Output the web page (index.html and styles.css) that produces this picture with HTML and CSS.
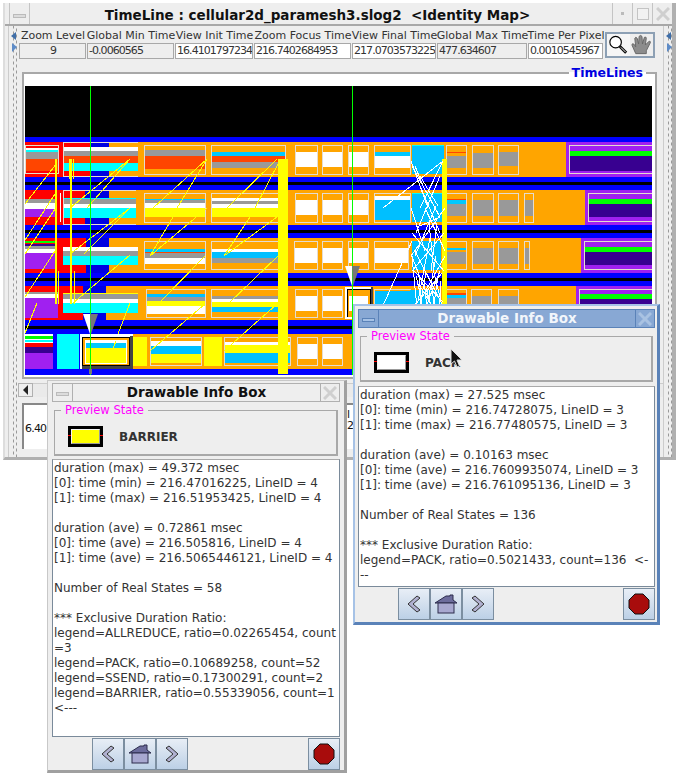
FILE: index.html
```html
<!DOCTYPE html>
<html lang="en">
<head>
    <meta charset="UTF-8">
    <link rel="stylesheet" href="styles.css">
    <title>TimeLine</title>
</head>
<body>
    <section class="window main-window">
        <header class="titlebar">
            <span class="wm-btn wm-menu"><i></i></span>
            <h1 class="title">TimeLine : cellular2d_paramesh3.slog2 &nbsp;&lt;Identity Map&gt;</h1>
            <span class="wm-btn wm-min"><i></i></span>
            <span class="wm-btn wm-max"><i></i></span>
            <span class="wm-btn wm-close">
                <svg width="14" height="14" viewBox="0 0 14 14"><path d="M1 1 L13 13 M13 1 L1 13" stroke="#cfcfcf" stroke-width="3"/></svg>
            </span>
        </header>
        <div class="main-body">
            <div class="divider">
                <svg width="8" height="20" viewBox="0 0 8 20"><path d="M6 0 V8 L1 4 Z" fill="#3f6ea8"/><path d="M2 11 V20 L7 15 Z" fill="#5e8cc8"/></svg>
            </div>
            <div class="content">
                <div class="toolbar">
                    <div class="readouts">
                        <div class="readout"><label>Zoom Level</label><output class="center">9</output></div>
                        <div class="readout"><label>Global Min Time</label><output>-0.0060565</output></div>
                        <div class="readout"><label>View Init Time</label><output class="live">16.4101797234</output></div>
                        <div class="readout"><label>Zoom Focus Time</label><output class="live">216.7402684953</output></div>
                        <div class="readout"><label>View Final Time</label><output class="live">217.0703573225</output></div>
                        <div class="readout"><label>Global Max Time</label><output>477.634607</output></div>
                        <div class="readout"><label>Time Per Pixel</label><output class="live">0.0010545967</output></div>
                    </div>
                    <div class="tools">
                        <span class="tool tool-on">
                            <svg width="24" height="24" viewBox="0 0 24 24"><circle cx="9" cy="9" r="6" fill="#fff" stroke="#000" stroke-width="1.2"/><path d="M13.500 13.500 L20 20" stroke="#000" stroke-width="3"/><path d="M14.500 14.500 L19.500 19.500" stroke="#fff" stroke-width="1"/></svg>
                        </span>
                        <span class="tool">
                            <svg width="24" height="24" viewBox="0 0 24 24"><path d="M6 21 L2 12 Q2 10 4 11 L6 14 L5 5 Q6 3 7.500 5 L9 11 L9.500 3 Q11 1 12.500 3 L13 11 L15 4 Q17 3 17 5 L16 12 L20 8 Q22 8 21 10 L17 18 L17 21 Z" fill="#8c8c8c" stroke="#666" stroke-width="1"/></svg>
                        </span>
                    </div>
                </div>

                <fieldset class="timelines">
                    <legend>TimeLines</legend>
                    <svg class="chart" width="627" height="289" viewBox="25 85 627 289" shape-rendering="crispEdges">
                        <rect class="blue" x="25" y="85" width="627" height="289"/>
                        <rect class="black" x="25" y="85" width="627" height="51"/>
                        <rect class="black" x="25" y="181" width="627" height="3"/>
                        <rect class="black" x="25" y="229" width="627" height="3"/>
                        <rect class="black" x="25" y="277" width="627" height="3"/>
                        <rect class="black" x="25" y="325" width="627" height="3"/>

                        <!-- row 1 -->
                        <g transform="translate(0 141)">
                            <rect class="red" x="25" y="0" width="38" height="35"/>
                            <rect class="white" x="26" y="6" width="32" height="2"/>
                            <rect class="cyan" x="26" y="8" width="32" height="2"/>
                            <rect class="grey" x="26" y="10" width="32" height="7"/>
                            <rect class="rust" x="26" y="17" width="32" height="12"/>
                            <rect class="box" x="25.500" y="3.500" width="33" height="28"/>
                            <rect class="red" x="63" y="0" width="27" height="35"/>
                            <rect class="navy" x="90" y="0" width="19" height="35"/>
                            <rect class="orange" x="109" y="0" width="29" height="35"/>
                            <rect class="white" x="63" y="5" width="75" height="4"/>
                            <rect class="grey" x="63" y="9" width="75" height="5"/>
                            <rect class="rust" x="63" y="14" width="75" height="7"/>
                            <rect class="cyan" x="63" y="21" width="75" height="8"/>
                            <rect class="box" x="63.500" y="0.500" width="75" height="34"/>
                            <rect class="orange" x="138" y="0" width="428" height="35"/>
                            <rect class="grey" x="145" y="8" width="60" height="6"/>
                            <rect class="rust" x="145" y="14" width="60" height="13"/>
                            <rect class="box" x="144.500" y="3.500" width="61" height="29"/>
                            <rect class="cyan2" x="212" y="10" width="73" height="4"/>
                            <rect class="rust" x="212" y="14" width="73" height="6"/>
                            <rect class="grey" x="212" y="20" width="73" height="6"/>
                            <rect class="box" x="211.500" y="3.500" width="74" height="29"/>
                            <rect class="white" x="295" y="10" width="22" height="15"/>
                            <rect class="box" x="295.500" y="3.500" width="22" height="29"/>
                            <rect class="white" x="322" y="10" width="20" height="15"/>
                            <rect class="box" x="322.500" y="3.500" width="20" height="29"/>
                            <rect class="white" x="348" y="10" width="20" height="15"/>
                            <rect class="box" x="348.500" y="3.500" width="20" height="29"/>
                            <rect class="cyan2" x="374" y="10" width="36" height="4"/>
                            <rect class="white" x="374" y="14" width="36" height="12"/>
                            <rect class="box" x="374.500" y="3.500" width="36" height="29"/>
                            <rect class="sky" x="412" y="3" width="32" height="29"/>
                            <rect class="cyan" x="412" y="3" width="32" height="1"/>
                            <rect class="grey" x="446" y="14" width="20" height="12"/>
                            <rect class="rust" x="446" y="10" width="20" height="1"/>
                            <rect class="box" x="446.500" y="3.500" width="20" height="29"/>
                            <rect class="grey" x="472" y="11" width="21" height="15"/>
                            <rect class="box" x="472.500" y="3.500" width="21" height="29"/>
                            <rect class="grey" x="498" y="10" width="20" height="14"/>
                            <rect class="box" x="498.500" y="3.500" width="20" height="29"/>
                            <rect class="purple" x="566" y="0" width="86" height="35"/>
                            <rect class="green" x="570" y="9" width="82" height="5"/>
                            <rect class="indigo" x="570" y="14" width="82" height="15"/>
                            <rect class="box" x="569.500" y="3.500" width="90" height="28"/>
                        </g>

                        <!-- row 2 -->
                        <g transform="translate(0 189)">
                            <rect class="red" x="25" y="0" width="38" height="35"/>
                            <rect class="grey" x="25" y="9" width="31" height="4"/>
                            <rect class="white" x="25" y="13" width="31" height="6"/>
                            <rect class="purple" x="25" y="19" width="31" height="8"/>
                            <rect class="white" x="60" y="3" width="1" height="29"/>
                            <rect class="red" x="63" y="0" width="22" height="35"/>
                            <rect class="navy" x="85" y="0" width="24" height="35"/>
                            <rect class="orange" x="109" y="0" width="27" height="35"/>
                            <rect class="cyan" x="63" y="8" width="73" height="1"/>
                            <rect class="grey" x="63" y="9" width="73" height="5"/>
                            <rect class="white" x="63" y="14" width="73" height="4"/>
                            <rect class="cyan" x="63" y="18" width="73" height="10"/>
                            <rect class="box" x="63.500" y="0.500" width="73" height="34"/>
                            <rect class="orange" x="136" y="0" width="449" height="35"/>
                            <rect class="cyan2" x="145" y="9" width="60" height="1"/>
                            <rect class="grey" x="145" y="10" width="60" height="3"/>
                            <rect class="white" x="145" y="13" width="60" height="5"/>
                            <rect class="yellow" x="145" y="18" width="60" height="9"/>
                            <rect class="box" x="144.500" y="3.500" width="61" height="29"/>
                            <rect class="white" x="212" y="8" width="73" height="3"/>
                            <rect class="grey" x="212" y="11" width="73" height="3"/>
                            <rect class="white" x="212" y="14" width="73" height="4"/>
                            <rect class="yellow" x="212" y="18" width="73" height="9"/>
                            <rect class="box" x="211.500" y="3.500" width="74" height="29"/>
                            <rect class="white" x="295" y="10" width="22" height="15"/>
                            <rect class="box" x="295.500" y="3.500" width="22" height="29"/>
                            <rect class="white" x="322" y="10" width="20" height="15"/>
                            <rect class="box" x="322.500" y="3.500" width="20" height="29"/>
                            <rect class="white" x="348" y="10" width="20" height="15"/>
                            <rect class="box" x="348.500" y="3.500" width="20" height="29"/>
                            <rect class="white" x="374" y="6" width="36" height="4"/>
                            <rect class="sky" x="374" y="10" width="36" height="20"/>
                            <rect class="box" x="374.500" y="3.500" width="36" height="29"/>
                            <rect class="sky" x="412" y="3" width="32" height="29"/>
                            <rect class="cyan" x="412" y="3" width="32" height="1"/>
                            <rect class="grey" x="446" y="14" width="20" height="12"/>
                            <rect class="rust" x="446" y="9" width="20" height="1"/>
                            <rect class="cyan2" x="446" y="10" width="20" height="4"/>
                            <rect class="box" x="446.500" y="3.500" width="20" height="29"/>
                            <rect class="grey" x="472" y="10" width="21" height="16"/>
                            <rect class="box" x="472.500" y="3.500" width="21" height="29"/>
                            <rect class="grey" x="498" y="10" width="20" height="16"/>
                            <rect class="box" x="498.500" y="3.500" width="20" height="29"/>
                            <rect class="grey" x="525" y="10" width="9" height="16"/>
                            <rect class="box" x="524.500" y="3.500" width="9" height="29"/>
                            <rect class="purple" x="585" y="0" width="67" height="35"/>
                            <rect class="green" x="589" y="9" width="63" height="5"/>
                            <rect class="indigo" x="589" y="14" width="63" height="13"/>
                            <rect class="box" x="588.500" y="3.500" width="70" height="28"/>
                        </g>

                        <!-- row 3 -->
                        <g transform="translate(0 237)">
                            <rect class="red" x="25" y="0" width="38" height="35"/>
                            <rect class="green" x="25" y="3" width="30" height="2"/>
                            <rect class="indigo" x="25" y="6" width="30" height="2"/>
                            <rect class="grey" x="25" y="8" width="30" height="3"/>
                            <rect class="white" x="25" y="11" width="30" height="4"/>
                            <rect class="purple" x="25" y="15" width="30" height="16"/>
                            <rect class="red" x="63" y="0" width="23" height="35"/>
                            <rect class="navy" x="86" y="0" width="23" height="35"/>
                            <rect class="orange" x="109" y="0" width="29" height="35"/>
                            <rect class="white" x="63" y="9" width="75" height="4"/>
                            <rect class="grey" x="63" y="13" width="75" height="5"/>
                            <rect class="cyan" x="63" y="18" width="75" height="9"/>
                            <rect class="orange" x="138" y="0" width="443" height="35"/>
                            <rect class="cyan2" x="145" y="11" width="60" height="3"/>
                            <rect class="rust" x="145" y="14" width="60" height="1"/>
                            <rect class="grey" x="145" y="15" width="60" height="5"/>
                            <rect class="white" x="145" y="20" width="60" height="6"/>
                            <rect class="box" x="144.500" y="3.500" width="61" height="28"/>
                            <rect class="white" x="212" y="11" width="73" height="3"/>
                            <rect class="sky" x="212" y="14" width="73" height="6"/>
                            <rect class="grey" x="212" y="20" width="73" height="5"/>
                            <rect class="box" x="211.500" y="3.500" width="74" height="28"/>
                            <rect class="white" x="295" y="10" width="22" height="15"/>
                            <rect class="box" x="294.500" y="3.500" width="23" height="28"/>
                            <rect class="white" x="322" y="10" width="20" height="15"/>
                            <rect class="box" x="322.500" y="3.500" width="20" height="28"/>
                            <rect class="white" x="348" y="10" width="20" height="15"/>
                            <rect class="box" x="348.500" y="3.500" width="20" height="28"/>
                            <rect class="white" x="374" y="10" width="34" height="15"/>
                            <rect class="box" x="374.500" y="3.500" width="34" height="28"/>
                            <rect class="sky" x="412" y="3" width="29" height="29"/>
                            <rect class="cyan2" x="446" y="10" width="20" height="2"/>
                            <rect class="grey" x="446" y="14" width="20" height="12"/>
                            <rect class="box" x="446.500" y="3.500" width="20" height="28"/>
                            <rect class="grey" x="472" y="10" width="21" height="16"/>
                            <rect class="box" x="472.500" y="3.500" width="21" height="28"/>
                            <rect class="grey" x="498" y="10" width="20" height="16"/>
                            <rect class="box" x="498.500" y="3.500" width="20" height="28"/>
                            <rect class="grey" x="525" y="10" width="4" height="16"/>
                            <rect class="box" x="524.500" y="3.500" width="5" height="28"/>
                            <rect class="purple" x="581" y="0" width="71" height="35"/>
                            <rect class="green" x="585" y="9" width="67" height="5"/>
                            <rect class="indigo" x="585" y="14" width="67" height="13"/>
                            <rect class="box" x="584.500" y="3.500" width="75" height="28"/>
                        </g>

                        <!-- row 4 -->
                        <g transform="translate(0 285)">
                            <rect class="red" x="25" y="0" width="38" height="34"/>
                            <rect class="grey" x="25" y="6" width="33" height="2"/>
                            <rect class="white" x="25" y="8" width="33" height="4"/>
                            <rect class="purple" x="25" y="12" width="33" height="20"/>
                            <rect class="red" x="63" y="0" width="20" height="34"/>
                            <rect class="navy" x="83" y="0" width="23" height="34"/>
                            <rect class="orange" x="106" y="0" width="32" height="34"/>
                            <rect class="yellow" x="63" y="7" width="75" height="1"/>
                            <rect class="grey" x="63" y="8" width="75" height="5"/>
                            <rect class="white" x="63" y="13" width="75" height="4"/>
                            <rect class="cyan" x="63" y="17" width="75" height="10"/>
                            <rect class="orange" x="138" y="0" width="438" height="34"/>
                            <rect class="sky" x="147" y="8" width="58" height="3"/>
                            <rect class="grey" x="147" y="11" width="58" height="4"/>
                            <rect class="yellow" x="147" y="15" width="58" height="5"/>
                            <rect class="white" x="147" y="20" width="58" height="8"/>
                            <rect class="box" x="146.500" y="3.500" width="59" height="28"/>
                            <rect class="grey" x="212" y="10" width="73" height="3"/>
                            <rect class="white" x="212" y="13" width="73" height="3"/>
                            <rect class="yellow" x="212" y="16" width="73" height="5"/>
                            <rect class="sky" x="212" y="21" width="73" height="5"/>
                            <rect class="box" x="211.500" y="3.500" width="74" height="28"/>
                            <rect class="white" x="295" y="10" width="22" height="15"/>
                            <rect class="box" x="295.500" y="3.500" width="22" height="28"/>
                            <rect class="white" x="322" y="10" width="20" height="15"/>
                            <rect class="box" x="322.500" y="3.500" width="20" height="28"/>
                            <rect class="sky" x="374" y="5" width="36" height="24"/>
                            <rect class="box" x="374.500" y="3.500" width="36" height="28"/>
                            <rect class="sky" x="410" y="4" width="31" height="25"/>
                            <rect class="rust" x="446" y="7" width="20" height="2"/>
                            <rect class="cyan2" x="446" y="9" width="20" height="3"/>
                            <rect class="grey" x="446" y="12" width="20" height="12"/>
                            <rect class="box" x="446.500" y="3.500" width="20" height="28"/>
                            <rect class="grey" x="471" y="10" width="21" height="14"/>
                            <rect class="box" x="471.500" y="3.500" width="20" height="28"/>
                            <rect class="grey" x="498" y="10" width="20" height="14"/>
                            <rect class="box" x="498.500" y="3.500" width="20" height="28"/>
                            <rect class="purple" x="576" y="0" width="76" height="34"/>
                            <rect class="green" x="580" y="8" width="72" height="5"/>
                            <rect class="indigo" x="580" y="13" width="72" height="15"/>
                            <rect class="box" x="579.500" y="3.500" width="80" height="28"/>
                        </g>

                        <!-- row 5 -->
                        <g transform="translate(0 333)">
                            <rect class="white" x="25" y="0" width="28" height="35"/>
                            <rect class="green" x="25" y="2" width="28" height="3"/>
                            <rect class="cyan" x="25" y="6" width="28" height="2"/>
                            <rect class="red" x="25" y="9" width="28" height="4"/>
                            <rect class="indigo" x="25" y="13" width="28" height="6"/>
                            <rect class="purple" x="25" y="19" width="28" height="16"/>
                            <rect class="cyan" x="57" y="0" width="22" height="35"/>
                            <rect class="orange" x="133" y="0" width="222" height="35"/>
                            <rect class="yellow" x="133" y="3" width="14" height="29"/>
                            <rect class="white" x="151" y="7" width="50" height="5"/>
                            <rect class="sky" x="151" y="12" width="50" height="8"/>
                            <rect class="yellow" x="151" y="20" width="50" height="9"/>
                            <rect class="box" x="150.500" y="3.500" width="51" height="28"/>
                            <rect class="yellow" x="204" y="3" width="18" height="29"/>
                            <rect class="white" x="225" y="8" width="65" height="3"/>
                            <rect class="yellow" x="225" y="11" width="65" height="8"/>
                            <rect class="sky" x="225" y="19" width="65" height="10"/>
                            <rect class="box" x="224.500" y="3.500" width="66" height="28"/>
                            <rect class="white" x="297" y="10" width="20" height="15"/>
                            <rect class="box" x="297.500" y="3.500" width="20" height="28"/>
                            <rect class="white" x="322" y="10" width="20" height="15"/>
                            <rect class="box" x="322.500" y="3.500" width="20" height="28"/>
                        </g>

                        <!-- selected drawable in row 5 -->
                        <rect class="white" x="80" y="333" width="53" height="35"/>
                        <rect class="dark" x="82" y="365" width="51" height="3"/>
                        <rect class="dark" x="130" y="335" width="3" height="33"/>
                        <rect class="black" x="82" y="336" width="48" height="29"/>
                        <rect class="orange" x="83" y="337" width="46" height="27"/>
                        <rect class="white" x="85" y="339" width="42" height="24"/>
                        <rect class="cyan2" x="86" y="342" width="40" height="5"/>
                        <rect class="yellow" x="86" y="347" width="40" height="15"/>

                        <!-- selected drawable in row 4 -->
                        <rect class="white" x="345" y="286" width="28" height="32"/>
                        <rect class="dark" x="371" y="286" width="2" height="32"/>
                        <rect class="orange" x="347" y="288" width="24" height="28"/>
                        <rect class="black" x="347" y="288" width="24" height="1"/>
                        <rect class="black" x="347" y="288" width="1" height="28"/>
                        <rect class="black" x="370" y="288" width="1" height="28"/>
                        <rect class="white" x="349" y="295" width="19" height="15"/>

                        <!-- yellow bars -->
                        <rect class="yellow" x="278" y="158" width="10" height="215"/>
                        <rect class="yellow" x="55" y="158" width="2" height="145"/>
                        <rect class="yellow" x="58" y="270" width="1" height="33"/>
                        <rect class="yellow" x="70" y="158" width="2" height="145"/>
                        <rect class="yellow" x="69" y="158" width="1" height="20"/>
                        <rect class="yellow" x="73" y="158" width="1" height="20"/>
                        <rect class="yellow" x="74" y="270" width="1" height="33"/>
                        <rect class="yellow" x="442" y="158" width="5" height="162"/>

                        <g class="arrows-yellow">
                            <path d="M25 203 L57 162 M25 239 L55 193 M25 253 L55 208 M25 296 L55 250 M25 332 L37 302"/>
                            <path d="M70 207 L130 158 M87 207 L130 158 M70 253 L130 207 M84 253 L130 207 M73 302 L130 254 M118 333 L130 302 M112 350 L116 340"/>
                            <path d="M153 207 L207 158 M177 207 L207 158 M150 255 L173 216 M150 255 L207 207 M158 303 L205 255 M150 350 L205 303"/>
                            <path d="M227 207 L277 158 M255 207 L278 163 M224 255 L250 216 M224 255 L277 216 M228 303 L278 255 M224 350 L277 303"/>
                        </g>
                        <g class="arrows-white">
                            <path d="M383 207 L443 160 M411 160 L428 207 M443 160 L420 207 M412 165 L440 216 M420 175 L438 205"/>
                            <path d="M411 207 L425 250 M445 207 L411 255 M425 207 L445 250 M436 205 L415 255 M420 225 L440 216"/>
                            <path d="M411 253 L430 302 M445 255 L420 300 M415 250 L443 305 M430 237 L418 300 M436 255 L425 318"/>
                            <path d="M377 318 L412 240 M412 255 L418 318 M443 300 L430 318 M420 285 L440 318 M427 290 L434 318"/>
                            <path d="M415 165 L423 185 M419 275 L423 318 M424 278 L428 318 M431 280 L436 318 M438 275 L432 318 M441 280 L439 318"/>
                            <path d="M416 275 L422 300 M426 272 L420 305 M434 272 L441 300 M440 270 L428 300 M429 222 L434 270 M437 222 L431 270"/>
                            <path d="M412 232 L444 270 M444 232 L412 270 M414 270 L442 300 M442 272 L414 305 M418 180 L440 232 M440 175 L416 232"/>
                        </g>
                        <rect class="green" x="90" y="85" width="1" height="289"/>
                        <rect class="green" x="352" y="85" width="1" height="289"/>
                        <g shape-rendering="auto">
                            <path class="white" d="M83 313 L90 313 L90 333 Z"/>
                            <path class="dark-grey" d="M90 313 L98 313 L91 333 Z"/>
                            <path class="white" d="M345 265 L352 265 L352 285 Z"/>
                            <path class="dark-grey" d="M352 265 L360 265 L353 285 Z"/>
                            <rect class="dark-grey" x="89" y="368" width="3" height="5"/>
                        </g>
                    </svg>
                </fieldset>

                <div class="scrollbar">
                    <span class="scroll-btn"><svg width="6" height="10" viewBox="0 0 6 10"><path d="M5 0 V10 L0 5 Z" fill="#222"/></svg></span>
                    <span class="scroll-track"></span>
                </div>
                <div class="ruler-row">
                    <div class="ruler"><span class="tick">6.40</span><span class="tick tick-far">l<br>2:</span></div>
                </div>
            </div>
            <div class="divider divider-right">
                <svg width="8" height="20" viewBox="0 0 8 20"><path d="M6 0 V8 L1 4 Z" fill="#3f6ea8"/><path d="M2 11 V20 L7 15 Z" fill="#5e8cc8"/></svg>
            </div>
        </div>
    </section>

    <section class="window info-box info-left">
        <header class="info-titlebar">
            <span class="info-menu"><i></i></span>
            <h2 class="info-title">Drawable Info Box</h2>
            <span class="info-close"><svg width="14" height="14" viewBox="0 0 14 14"><path d="M1 1 L13 13 M13 1 L1 13" stroke="#cfcfcf" stroke-width="3"/></svg></span>
        </header>
        <fieldset class="preview">
            <legend>Preview State</legend>
            <span class="swatch swatch-barrier"><i></i></span>
            <strong class="state-name">BARRIER</strong>
        </fieldset>
        <pre class="info-text">duration (max) = 49.372 msec
[0]: time (min) = 216.47016225, LineID = 4
[1]: time (max) = 216.51953425, LineID = 4

duration (ave) = 0.72861 msec
[0]: time (ave) = 216.505816, LineID = 4
[1]: time (ave) = 216.5065446121, LineID = 4

Number of Real States = 58

*** Exclusive Duration Ratio:
legend=ALLREDUCE, ratio=0.02265454, count
=3
legend=PACK, ratio=0.10689258, count=52
legend=SSEND, ratio=0.17300291, count=2
legend=BARRIER, ratio=0.55339056, count=1
&lt;---</pre>
        <footer class="info-buttons">
            <div class="nav-group">
                <span class="icon-btn"><svg width="22" height="22" viewBox="0 0 22 22"><path d="M14 3 L5 11 L14 19 L17 17 L10 11 L17 5 Z" fill="#b0b0d0" stroke="#333" stroke-width="1"/></svg></span>
                <span class="icon-btn"><svg width="24" height="22" viewBox="0 0 24 22"><path d="M1 10 L12 3 L16 3 L16 2 L19 2 L19 7 L23 10 Z" fill="#6c6c9c" stroke="#2c2c4c"/><rect x="4" y="10" width="16" height="10" fill="#a8a8d0" stroke="#2c2c4c"/></svg></span>
                <span class="icon-btn"><svg width="22" height="22" viewBox="0 0 22 22"><path d="M8 3 L17 11 L8 19 L5 17 L12 11 L5 5 Z" fill="#b0b0d0" stroke="#333" stroke-width="1"/></svg></span>
            </div>
            <span class="icon-btn stop-btn"><svg width="22" height="22" viewBox="0 0 22 22"><path d="M7 1 H15 L21 7 V15 L15 21 H7 L1 15 V7 Z" fill="#a80c0c" stroke="#111" stroke-width="1"/></svg></span>
        </footer>
    </section>

    <section class="window info-box info-right">
        <header class="info-titlebar">
            <span class="info-menu"><i></i></span>
            <h2 class="info-title">Drawable Info Box</h2>
            <span class="info-close"><svg width="14" height="14" viewBox="0 0 14 14"><path d="M1 1 L13 13 M13 1 L1 13" stroke="#a9c2e2" stroke-width="3"/></svg></span>
        </header>
        <fieldset class="preview">
            <legend>Preview State</legend>
            <span class="swatch swatch-pack"><i></i></span>
            <strong class="state-name">PACK</strong>
        </fieldset>
        <pre class="info-text">duration (max) = 27.525 msec
[0]: time (min) = 216.74728075, LineID = 3
[1]: time (max) = 216.77480575, LineID = 3

duration (ave) = 0.10163 msec
[0]: time (ave) = 216.7609935074, LineID = 3
[1]: time (ave) = 216.761095136, LineID = 3

Number of Real States = 136

*** Exclusive Duration Ratio:
legend=PACK, ratio=0.5021433, count=136  &lt;-
--</pre>
        <footer class="info-buttons">
            <div class="nav-group">
                <span class="icon-btn"><svg width="22" height="22" viewBox="0 0 22 22"><path d="M14 3 L5 11 L14 19 L17 17 L10 11 L17 5 Z" fill="#b0b0d0" stroke="#333" stroke-width="1"/></svg></span>
                <span class="icon-btn"><svg width="24" height="22" viewBox="0 0 24 22"><path d="M1 10 L12 3 L16 3 L16 2 L19 2 L19 7 L23 10 Z" fill="#6c6c9c" stroke="#2c2c4c"/><rect x="4" y="10" width="16" height="10" fill="#a8a8d0" stroke="#2c2c4c"/></svg></span>
                <span class="icon-btn"><svg width="22" height="22" viewBox="0 0 22 22"><path d="M8 3 L17 11 L8 19 L5 17 L12 11 L5 5 Z" fill="#b0b0d0" stroke="#333" stroke-width="1"/></svg></span>
            </div>
            <span class="icon-btn stop-btn"><svg width="22" height="22" viewBox="0 0 22 22"><path d="M7 1 H15 L21 7 V15 L15 21 H7 L1 15 V7 Z" fill="#a80c0c" stroke="#111" stroke-width="1"/></svg></span>
        </footer>
    </section>

    <svg class="pointer" width="14" height="20" viewBox="0 0 14 20"><path d="M1 0 V15 L4.500 12 L7 18 L9.500 17 L7 11 L12 11 Z" fill="#111" stroke="#ddd" stroke-width="1"/></svg>
</body>
</html>
```

FILE: styles.css
```css
* {
    box-sizing: border-box;
}

body {
    margin: 0;
    width: 678px;
    height: 776px;
    position: relative;
    overflow: hidden;
    background-color: white;
    font-family: "DejaVu Sans", sans-serif;
    font-size: 12px;
    color: #333;
}

.window {
    position: absolute;
    background-color: #eeeeee;
}

/* main window */
.main-window {
    left: 3px;
    top: 3px;
    width: 673px;
    height: 457px;
    display: flex;
    flex-direction: column;
    border-right: 4px solid #b0b0b0;
    border-bottom: 3px solid #b0b0b0;
    border-left: 2px solid #dddddd;
}

.titlebar {
    height: 23px;
    display: flex;
    align-items: stretch;
    border-bottom: 2px solid #a8a8a8;
}

.wm-btn {
    width: 20px;
    display: flex;
    align-items: center;
    justify-content: center;
    border-left: 1px solid #c4c4c4;
}

.wm-menu {
    width: 21px;
    margin-left: 4px;
    border-right: 1px solid #c4c4c4;
}

.wm-menu i {
    width: 13px;
    height: 4px;
    margin-top: 5px;
    background-color: #dcdcdc;
    border: 1px solid #bbb;
}

.wm-min i {
    width: 3px;
    height: 3px;
    background-color: #bbb;
}

.wm-max i {
    width: 12px;
    height: 12px;
    border: 1px solid #c4c4c4;
    background-color: #f2f2f2;
}

.title {
    flex: 1;
    margin: 0;
    font-size: 13.5px;
    line-height: 24px;
    font-weight: bold;
    color: #111;
    text-align: center;
    padding-right: 7px;
    white-space: nowrap;
}

.main-body {
    flex: 1;
    display: flex;
    padding-left: 3px;
    min-height: 0;
}

.divider {
    width: 10px;
    padding-top: 6px;
    padding-left: 1px;
    background-image: radial-gradient(#999 0.7px, transparent 0.8px), radial-gradient(#999 0.7px, transparent 0.8px);
    background-size: 3px 6px, 3px 6px;
    background-position: 3px 28px, 6px 31px;
    background-repeat: repeat-y;
    background-color: #eee;
    border-left: 1px solid #ccc;
}

.divider-right {
    width: 9px;
}

.content {
    flex: 1;
    min-width: 0;
    display: flex;
    flex-direction: column;
    padding-top: 1px;
}

/* readouts */
.toolbar {
    display: flex;
    gap: 1px;
    height: 32px;
    flex: none;
    padding-left: 1px;
}

.readouts {
    display: grid;
    grid-template-columns: 68px 88px 79px 98px 85px 91px 76px;
}

.readout {
    display: flex;
    flex-direction: column;
    min-width: 0;
}

.readout label {
    height: 16px;
    line-height: 17px;
    font-size: 11px;
    white-space: nowrap;
    text-align: center;
    display: flex;
    justify-content: center;
}

.readout output {
    height: 16px;
    line-height: 14px;
    margin-right: 1px;
    padding-left: 1px;
    border: 1px solid #a8a8a8;
    font-size: 11px;
    letter-spacing: -0.95px;
    white-space: nowrap;
    overflow: hidden;
}

.readout .center {
    text-align: center;
}

.readout .live {
    background-color: white;
}

.tools {
    width: 50px;
    height: 26px;
    margin-top: 5px;
    display: flex;
    border: 2px solid #8da0b4;
}

.tool {
    width: 23px;
    display: flex;
    align-items: center;
    justify-content: center;
}

.tool-on {
    background-color: #f6f6f6;
}

/* chart */
.timelines {
    flex: none;
    margin: 7px 6px 0 4px;
    padding: 0 0 0 1px;
    height: 313px;
    border: 2px solid #a8a8a8;
    background-color: white;
    min-width: 0;
}

.timelines legend {
    margin-left: auto;
    margin-right: 9px;
    padding: 0 3px;
    font-size: 12.5px;
    line-height: 13px;
    font-weight: bold;
    color: #0000e0;
}

.chart {
    display: block;
    margin-top: 7px;
}

.arrows-yellow path {
    stroke: #ffff00;
    fill: none;
}

.arrows-white path {
    stroke: white;
    fill: none;
}

.chart .blue { fill: #0000ff; }
.chart .navy { fill: #0000e0; }
.chart .black { fill: black; }
.chart .red { fill: #ff0000; }
.chart .white { fill: white; }
.chart .cyan { fill: #00ffff; }
.chart .cyan2 { fill: #00c8ff; }
.chart .sky { fill: #00bfff; }
.chart .grey { fill: #999999; }
.chart .rust { fill: #ff4500; }
.chart .orange { fill: #ffa500; }
.chart .yellow { fill: #ffff00; }
.chart .purple { fill: #a020f0; }
.chart .indigo { fill: #380090; }
.chart .green { fill: #00ff00; }
.chart .dark { fill: #444444; }
.chart .dark-grey { fill: #777777; }
.chart .box { fill: none; stroke: #e4dcd0; }

/* scrollbar and ruler */
.scrollbar {
    flex: none;
    height: 14px;
    margin-top: 4px;
    display: flex;
}

.scroll-btn {
    width: 15px;
    display: flex;
    align-items: center;
    justify-content: center;
    border: 1px solid #b0b0b0;
}

.scroll-track {
    flex: 1;
    background-color: #eaeaea;
    border-top: 1px solid #ccc;
}

.ruler-row {
    flex: 1;
    padding: 6px 6px 0 4px;
}

.ruler {
    height: 46px;
    position: relative;
    background-color: white;
    border-top: 2px solid #888;
    border-left: 2px solid #888;
    color: #111;
    font-size: 11px;
    letter-spacing: -0.8px;
    line-height: 15px;
    padding: 16px 0 0 1px;
}

.tick-far {
    position: absolute;
    left: 323px;
    top: 4px;
    line-height: 11px;
}

/* info boxes */
.info-box {
    display: flex;
    flex-direction: column;
}

.info-left {
    left: 47px;
    top: 380px;
    width: 300px;
    height: 393px;
    padding: 0 4px 0 4px;
    border: 1px solid #c8c8c8;
    border-right: 3px solid #a0a0a0;
    border-bottom: 3px solid #a0a0a0;
}

.info-right {
    left: 353px;
    top: 304px;
    width: 307px;
    height: 321px;
    padding: 0 2px 2px 3px;
    border: 2px solid #a6c2e6;
    border-right: 3px solid #5a82b8;
    border-bottom: 3px solid #5a82b8;
}

.info-titlebar {
    height: 19px;
    flex: none;
    display: flex;
    margin-top: 2px;
    border: 1px solid #b0b0b0;
}

.info-right .info-titlebar {
    margin-top: 3px;
    background-color: #88a8d4;
    border-color: #5a82b8;
    color: white;
}

.info-menu {
    width: 20px;
    display: flex;
    align-items: flex-end;
    justify-content: center;
    padding-bottom: 5px;
    border-right: 1px solid #b0b0b0;
}

.info-menu i {
    width: 13px;
    height: 4px;
    border: 1px solid #bbb;
    background-color: #dcdcdc;
}

.info-right .info-menu {
    border-color: #5a82b8;
}

.info-right .info-menu i {
    background-color: #a6c2e6;
    border-color: #5a82b8;
}

.info-title {
    flex: 1;
    margin: 0;
    font-size: 13.5px;
    line-height: 17px;
    font-weight: bold;
    text-align: center;
    color: #111;
}

.info-right .info-title {
    color: #f2f6fb;
}

.info-close {
    width: 19px;
    display: flex;
    align-items: center;
    justify-content: center;
    border-left: 1px solid #b0b0b0;
}

.info-right .info-close {
    border-color: #5a82b8;
}

.preview {
    flex: none;
    height: 52px;
    margin: 2px 2px 3px;
    padding: 9px 0 0 13px;
    display: flex;
    align-items: center;
    gap: 16px;
    border: 2px solid #a8a8a8;
    border-width: 1px 2px 2px 1px;
    min-width: 0;
}

.info-right .preview {
    margin-bottom: 4px;
}

.preview legend {
    margin-left: -7px;
    padding: 0 4px;
    font-size: 11.5px;
    line-height: 13px;
    color: #ff00ff;
}

.swatch {
    width: 35px;
    height: 21px;
    flex: none;
    border: 3px solid black;
    position: relative;
    display: block;
}

.swatch i {
    display: block;
    height: 100%;
    border-right: 1px solid #999;
    border-bottom: 1px solid #999;
    border-left: 1px solid #f4f4f4;
    border-top: 1px solid #f4f4f4;
}

.swatch-barrier i {
    background-color: #ffff00;
}

.swatch-pack i {
    background-color: white;
}

.swatch::before,
.swatch::after {
    content: "";
    position: absolute;
    top: 6px;
    width: 3px;
    height: 1px;
    background-color: #ff0000;
}

.swatch::before {
    left: -3px;
}

.swatch::after {
    right: -3px;
}

.state-name {
    font-size: 12px;
}

.info-text {
    flex: 1;
    margin: 0;
    padding: 1px 0 0 1px;
    background-color: white;
    border: 1px solid #7a8a9a;
    border-top-color: #aaa;
    font-family: "DejaVu Sans", sans-serif;
    font-size: 12px;
    line-height: 15px;
    white-space: pre;
    overflow: hidden;
}

.info-buttons {
    flex: none;
    height: 33px;
    display: flex;
    justify-content: space-between;
    padding: 1px 0 0 40px;
}

.nav-group {
    display: flex;
}

.icon-btn {
    width: 32px;
    height: 32px;
    display: flex;
    align-items: center;
    justify-content: center;
    border: 1px solid #7b8ea0;
    background-image: linear-gradient(#e8eef6, #bcd0e6);
}

.pointer {
    position: absolute;
    left: 450px;
    top: 349px;
}
```
